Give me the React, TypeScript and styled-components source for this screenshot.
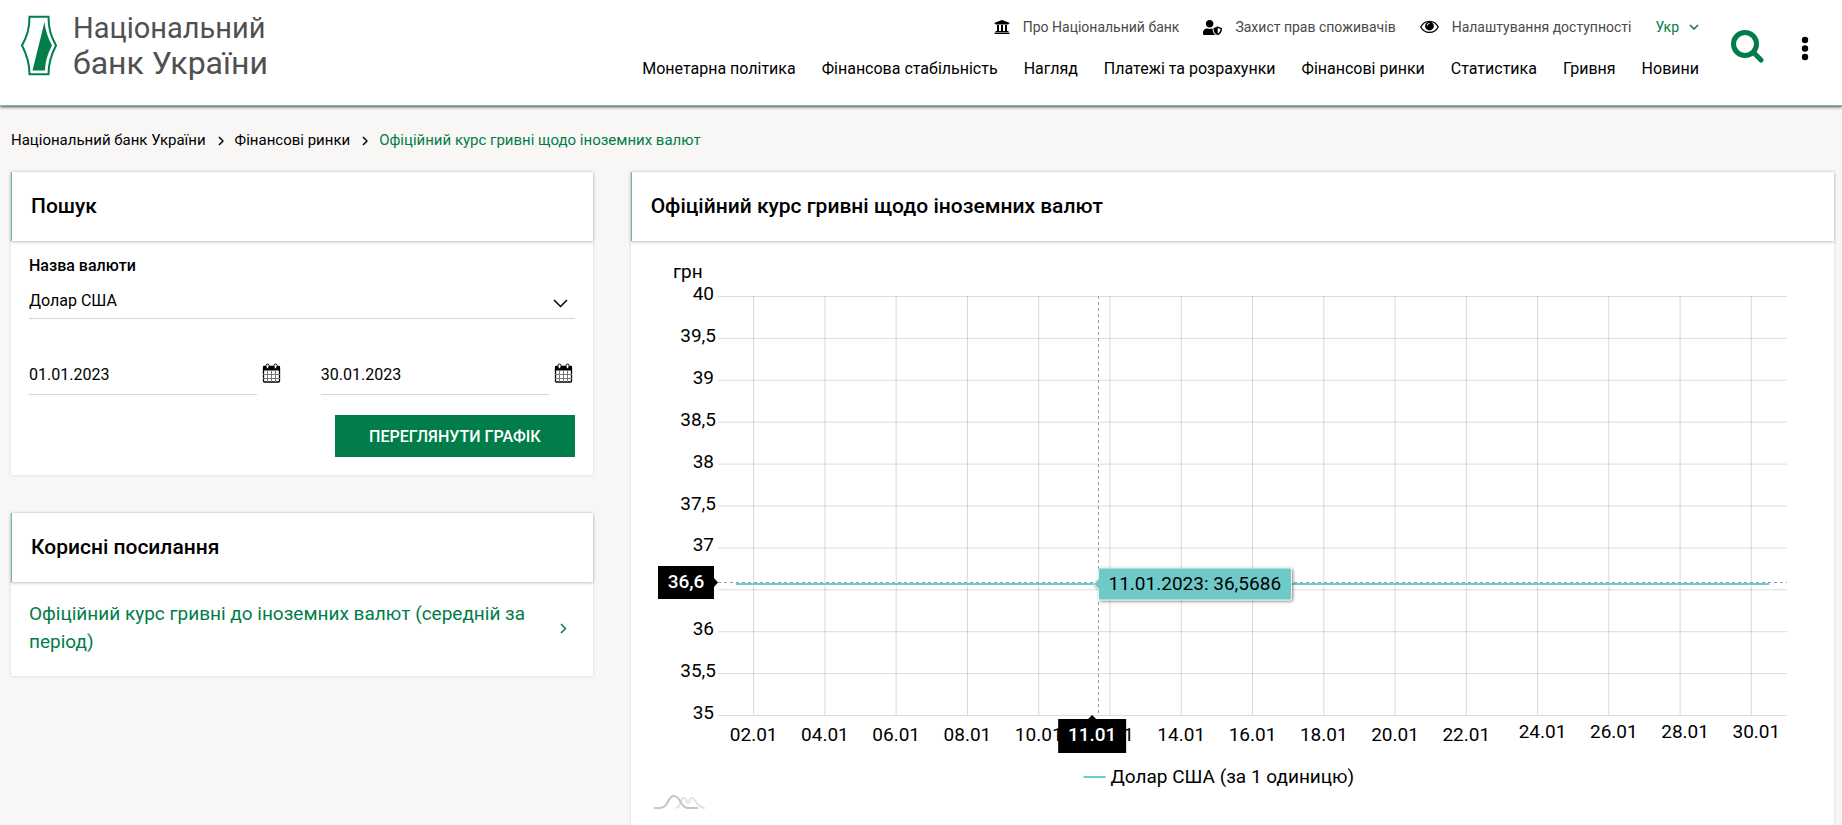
import React, { useLayoutEffect, useRef, useState } from "react";
import styled, { createGlobalStyle } from "styled-components";
import { FaUniversity, FaUserShield } from "react-icons/fa";

const green = "#007d48";

const GlobalStyle = createGlobalStyle`
  *, *::before, *::after { box-sizing: border-box; }
  body {
    margin: 0;
    background: #f8f7f6;
    color: #000;
    font-family: Roboto, "Noto Sans", sans-serif;
    font-size: 16px;
    overflow: hidden;
  }
  h1, h2, p, ul, ol { margin: 0; padding: 0; }
  ul, ol { list-style: none; }
  a { color: inherit; text-decoration: none; }
  button { font: inherit; cursor: pointer; border: 0; background: none; padding: 0; }
`;

const Header = styled.header`
  display: flex;
  align-items: flex-start;
  justify-content: space-between;
  height: 106px;
  padding: 0 33px 0 20px;
  background: #fff;
  border-bottom: 1px solid #6cbf98;
  box-shadow: 0 1px 3px rgba(0, 0, 0, 0.7);
`;

const Brand = styled.a`
  display: flex;
  gap: 15px;
  padding-top: 11px;
  color: #505050;

  svg { margin-top: 4px; }
`;

const BrandName = styled.span`
  display: flex;
  flex-direction: column;
  font-size: 29px;
  line-height: 35px;
`;

const BrandSecond = styled.span`
  font-size: 32px;
`;

const HeaderRight = styled.div`
  display: flex;
`;

const Menus = styled.div`
  display: flex;
  flex-direction: column;
  align-items: flex-end;
  gap: 20px;
  padding-top: 17px;
`;

const TopMenu = styled.ul`
  display: flex;
  align-items: center;
  gap: 24px;
  font-size: 14px;
  line-height: 20px;
  color: #4a4a4a;
`;

const TopLink = styled.a`
  display: flex;
  align-items: center;
  gap: 13px;

  svg { color: #000; }
`;

const LangButton = styled.button`
  display: flex;
  align-items: center;
  gap: 10px;
  color: ${green};
`;

const MainMenu = styled.ul`
  display: flex;
  gap: 26px;
  line-height: 24px;
`;

const IconButton = styled.button<{ $gap: number }>`
  display: flex;
  align-items: center;
  height: 34px;
  margin: 29px 0 0 ${(p) => p.$gap}px;
`;

const Breadcrumbs = styled.ol`
  display: flex;
  align-items: center;
  gap: 11px;
  padding: 24px 11px 21px;
  font-size: 15px;
  line-height: 21px;
`;

const Crumb = styled.li<{ $current?: boolean }>`
  display: flex;
  align-items: center;
  gap: 12px;
  color: ${(p) => (p.$current ? green : "#000")};
`;

const Main = styled.main`
  display: grid;
  grid-template-columns: 29fr 60fr;
  gap: 38px;
  align-items: start;
  padding: 0 8px 0 11px;
`;

const Side = styled.div`
  display: grid;
  gap: 38px;
`;

const Card = styled.section`
  background: #fff;
  box-shadow: 0 0 3px rgba(0, 0, 0, 0.15);
`;

const CardTitle = styled.h2`
  padding: 0 19px;
  border-left: 1px solid #66c096;
  box-shadow: 0 1px 3px rgba(0, 0, 0, 0.25);
  font-size: 21px;
  font-weight: 500;
  line-height: 69px;
`;

const Form = styled.form`
  display: flex;
  flex-direction: column;
  padding: 14px 18px 18px;
`;

const FieldLabel = styled.label`
  font-weight: 500;
  line-height: 21px;
`;

const SelectWrap = styled.div`
  display: grid;
  align-items: center;

  & > * { grid-area: 1 / 1; }
  svg { justify-self: end; margin: 12px 7px 0 0; pointer-events: none; }
`;

const Select = styled.select`
  appearance: none;
  width: 100%;
  height: 43px;
  padding: 6px 0 0;
  border: 0;
  border-bottom: 1px solid #d4d4d4;
  border-radius: 0;
  background: transparent;
  color: #000;
  font: inherit;
`;

const Dates = styled.div`
  display: grid;
  grid-template-columns: 1fr 1fr;
  gap: 38px;
  margin-top: 36px;
`;

const DateField = styled.div`
  display: flex;
  gap: 5px;
`;

const DateInput = styled.input`
  flex: 1;
  min-width: 0;
  height: 40px;
  padding: 0;
  border: 0;
  border-bottom: 1px solid #d4d4d4;
  background: transparent;
  color: #000;
  font: inherit;
`;

const DateButton = styled.button`
  display: flex;
  width: 21px;
  padding-top: 8px;
`;

const SubmitButton = styled.button`
  align-self: flex-end;
  height: 42px;
  margin-top: 20px;
  padding: 0 34px;
  background: ${green};
  color: #fff;
  font-weight: 500;
  text-transform: uppercase;
`;

const UsefulLink = styled.a`
  display: flex;
  align-items: center;
  justify-content: space-between;
  gap: 24px;
  padding: 18px 26px 20px 18px;
  color: ${green};
  font-size: 19px;
  line-height: 28px;

  svg { flex: none; }
`;

const ChartBox = styled.div`
  height: 600px;

  svg { display: block; font-size: 19px; }
`;

function Chevron({ down, size = 10, width = 1 }: { down?: boolean; size?: number; width?: number }) {
  const half = size / 2;
  return down ? (
    <svg width={size + 2} height={half + 2} fill="none" stroke="currentColor" strokeWidth={width}>
      <path d={`M1 1 L${half + 1} ${half + 1} L${size + 1} 1`} />
    </svg>
  ) : (
    <svg width={half + 2} height={size + 2} fill="none" stroke="currentColor" strokeWidth={width}>
      <path d={`M1 1 L${half + 1} ${half + 1} L1 ${size + 1}`} />
    </svg>
  );
}

function Logo() {
  return (
    <svg width="38" height="62" viewBox="0 0 38 62" aria-hidden="true">
      <path
        d="M9.5 1.8H28.5C28.5 14 31 21 36 30.5C31 40 28.5 48 28.5 59.2H9.5C9.5 48 7 40 2 30.5C7 21 9.5 14 9.5 1.8Z"
        fill="#fff"
        stroke="#007f4a"
        strokeWidth="2"
      />
      <path d="M24.5 7C25.5 16 28 23 32 30.5C27.5 39 25.5 46 25 55.5H12.5Z" fill="#007f4a" />
    </svg>
  );
}

function EyeIcon() {
  return (
    <svg width="19" height="14" viewBox="0 0 19 14" aria-hidden="true">
      <path d="M.8 7C4.5-.6 14.5-.6 18.2 7C14.5 14.2 4.5 14.2 .8 7Z" fill="#fff" stroke="#000" strokeWidth="1.3" />
      <circle cx="9.5" cy="6" r="4.4" />
      <path d="M7.3 5.5A2.3 2.3 0 0 1 9.5 3.3" fill="none" stroke="#fff" />
    </svg>
  );
}

function CalendarIcon() {
  return (
    <svg width="19" height="20" viewBox="0 0 19 20" aria-hidden="true">
      <rect x="1.5" y="3.5" width="16" height="15.5" rx="1" fill="#fff" stroke="#000" strokeWidth="1.3" />
      <path d="M1 3H18V7.5H1Z" />
      <path d="M1 11.5H18M1 15.5H18M5.5 7V19M9.5 7V19M13.5 7V19" stroke="#777" fill="none" />
      <rect x="4" y="1" width="3" height="4.5" rx="1.5" fill="#fff" stroke="#000" />
      <rect x="12" y="1" width="3" height="4.5" rx="1.5" fill="#fff" stroke="#000" />
    </svg>
  );
}

const topLinks = [
  { text: "Про Національний банк", icon: <FaUniversity size={16} /> },
  { text: "Захист прав споживачів", icon: <FaUserShield size={19} /> },
  { text: "Налаштування доступності", icon: <EyeIcon /> },
];

const sections = [
  "Монетарна політика",
  "Фінансова стабільність",
  "Нагляд",
  "Платежі та розрахунки",
  "Фінансові ринки",
  "Статистика",
  "Гривня",
  "Новини",
];

const rate = 36.5686;
const days = 30;
const plotTop = 55;
const plotHeight = 419;
const plotLeft = 87;
const plotRightMargin = 47;
const ticks = Array.from({ length: 11 }, (_, i) => 40 - i * 0.5);
const evenDays = Array.from({ length: 15 }, (_, i) => 2 * (i + 1));

function RateChart() {
  const box = useRef<HTMLDivElement>(null);
  const [width, setWidth] = useState(1200);

  useLayoutEffect(() => {
    const el = box.current;
    if (!el) return;
    const update = () => setWidth(el.clientWidth);
    update();
    const observer = new ResizeObserver(update);
    observer.observe(el);
    return () => observer.disconnect();
  }, []);

  const right = width - plotRightMargin;
  const bottom = plotTop + plotHeight;
  const cell = (right - plotLeft) / days;
  const dayStart = (d: number) => plotLeft + (d - 1) * cell;
  const dayMid = (d: number) => dayStart(d) + cell / 2;
  const yOf = (v: number) => plotTop + ((40 - v) / 5) * plotHeight;
  const cursorX = Math.round(dayMid(11) + 6) + 0.5;
  const rateY = Math.round(yOf(rate));
  const labelX = dayMid(11);
  const legendX = (plotLeft + right) / 2 - 169;

  return (
    <ChartBox ref={box}>
      <svg width={width} height="600" role="img" aria-label="Графік курсу долара США">
        <defs>
          <filter id="tipShadow" x="-10%" y="-30%" width="120%" height="170%">
            <feDropShadow dx="1" dy="1" stdDeviation="1.5" floodOpacity="0.5" />
          </filter>
        </defs>
        <text x="42" y="37">грн</text>
        {ticks.map((v) => (
          <g key={v}>
            <line x1={plotLeft} x2={right} y1={yOf(v) + 0.5} y2={yOf(v) + 0.5} stroke="#dcdcdc" />
            {/* the cursor's own label takes the place of the nearest tick label */}
            {Math.abs(v - rate) > 0.2 && (
              <text x={v % 1 ? 85 : 83} y={yOf(v) + 4} textAnchor="end">
                {String(v).replace(".", ",")}
              </text>
            )}
          </g>
        ))}
        {evenDays.map((d) => (
          <g key={d}>
            <line x1={dayStart(d)} x2={dayStart(d)} y1={plotTop} y2={bottom} stroke="#000" strokeOpacity="0.15" />
            <text x={dayStart(d) + (d > 22 ? 5 : 0)} y={bottom + (d > 22 ? 23 : 26)} textAnchor="middle">
              {String(d).padStart(2, "0")}.01
            </text>
          </g>
        ))}
        <g stroke="#999" strokeDasharray="3 3">
          <line x1={cursorX} x2={cursorX} y1={plotTop} y2={bottom} />
          <line x1={plotLeft} x2={right} y1={rateY - 1.5} y2={rateY - 1.5} />
        </g>
        <line x1={dayMid(1)} x2={dayMid(days)} y1={rateY} y2={rateY} stroke="#6dcbcb" strokeWidth="2" />

        <path d={`M27 ${rateY - 18}h56v12l4 4.5l-4 4.5v12h-56z`} />
        <text x="55" y={rateY + 4} textAnchor="middle" fill="#fff" fontWeight="500">36,6</text>

        <path d={`M${labelX - 34} ${bottom + 4}h30l4 -4l4 4h30v34h-68z`} />
        <text x={labelX} y={bottom + 26} textAnchor="middle" fill="#fff" fontWeight="500">11.01</text>

        <g transform={`translate(${cursorX - 5} ${rateY})`}>
          <path
            d="M0 0l5 -5v-9q0 -2 2 -2h189q2 0 2 2v28q0 2 -2 2h-189q-2 0 -2 -2v-9z"
            fill="#70c9c9"
            stroke="#e2f5f5"
            filter="url(#tipShadow)"
          />
          <text x="15" y="6">11.01.2023: 36,5686</text>
        </g>

        <line x1={legendX} x2={legendX + 22} y1={bottom + 62} y2={bottom + 62} stroke="#6dcbcb" strokeWidth="2" />
        <text x={legendX + 27} y={bottom + 68}>Долар США (за 1 одиницю)</text>

        <g transform={`translate(23 ${bottom + 79})`} fill="none" strokeWidth="2">
          <path d="M22 14C28 13 25 4 30 4C33 4 32 9 34 9C36 9 35 4 38 4C42 4 42 14 51 14" stroke="#e3e3e3" />
          <path d="M0 14H6C15 14 13 2 20 2C27 2 26 14 34 14H44" stroke="#c6c6c6" />
        </g>
      </svg>
    </ChartBox>
  );
}

export default function App() {
  return (
    <>
      <GlobalStyle />
      <Header>
        <Brand href="#">
          <Logo />
          <BrandName>
            <span>Національний</span>
            <BrandSecond>банк України</BrandSecond>
          </BrandName>
        </Brand>
        <HeaderRight>
          <Menus>
            <TopMenu>
              {topLinks.map((l) => (
                <li key={l.text}>
                  <TopLink href="#">
                    {l.icon}
                    {l.text}
                  </TopLink>
                </li>
              ))}
              <li>
                <LangButton type="button">
                  Укр <Chevron down size={8} width={1.5} />
                </LangButton>
              </li>
            </TopMenu>
            <nav>
              <MainMenu>
                {sections.map((s) => (
                  <li key={s}>
                    <a href="#">{s}</a>
                  </li>
                ))}
              </MainMenu>
            </nav>
          </Menus>
          <IconButton type="button" aria-label="Пошук" $gap={32}>
            <svg width="33" height="33" fill="none" stroke={green}>
              <circle cx="14" cy="14" r="11.5" strokeWidth="5" />
              <path d="M22.5 22.5L30 30" strokeWidth="5" strokeLinecap="round" />
            </svg>
          </IconButton>
          <IconButton type="button" aria-label="Меню" $gap={37}>
            <svg width="8" height="32">
              <circle cx="4" cy="10" r="3.2" />
              <circle cx="4" cy="18.5" r="3.2" />
              <circle cx="4" cy="27" r="3.2" />
            </svg>
          </IconButton>
        </HeaderRight>
      </Header>

      <nav aria-label="Навігація">
        <Breadcrumbs>
          <Crumb>
            <a href="#">Національний банк України</a>
            <Chevron size={8} width={1.5} />
          </Crumb>
          <Crumb>
            <a href="#">Фінансові ринки</a>
            <Chevron size={8} width={1.5} />
          </Crumb>
          <Crumb $current>Офіційний курс гривні щодо іноземних валют</Crumb>
        </Breadcrumbs>
      </nav>

      <Main>
        <Side>
          <Card>
            <CardTitle>Пошук</CardTitle>
            <Form onSubmit={(e) => e.preventDefault()}>
              <FieldLabel htmlFor="currency">Назва валюти</FieldLabel>
              <SelectWrap>
                <Select id="currency">
                  <option>Долар США</option>
                </Select>
                <Chevron down size={13} width={1.5} />
              </SelectWrap>
              <Dates>
                <DateField>
                  <DateInput aria-label="Дата від" defaultValue="01.01.2023" />
                  <DateButton type="button" aria-label="Обрати початкову дату">
                    <CalendarIcon />
                  </DateButton>
                </DateField>
                <DateField>
                  <DateInput aria-label="Дата до" defaultValue="30.01.2023" />
                  <DateButton type="button" aria-label="Обрати кінцеву дату">
                    <CalendarIcon />
                  </DateButton>
                </DateField>
              </Dates>
              <SubmitButton type="submit">Переглянути графік</SubmitButton>
            </Form>
          </Card>
          <Card>
            <CardTitle>Корисні посилання</CardTitle>
            <UsefulLink href="#">
              <span>Офіційний курс гривні до іноземних валют (середній за період)</span>
              <Chevron size={9} width={1.5} />
            </UsefulLink>
          </Card>
        </Side>
        <Card>
          <CardTitle as="h1">Офіційний курс гривні щодо іноземних валют</CardTitle>
          <RateChart />
        </Card>
      </Main>
    </>
  );
}
